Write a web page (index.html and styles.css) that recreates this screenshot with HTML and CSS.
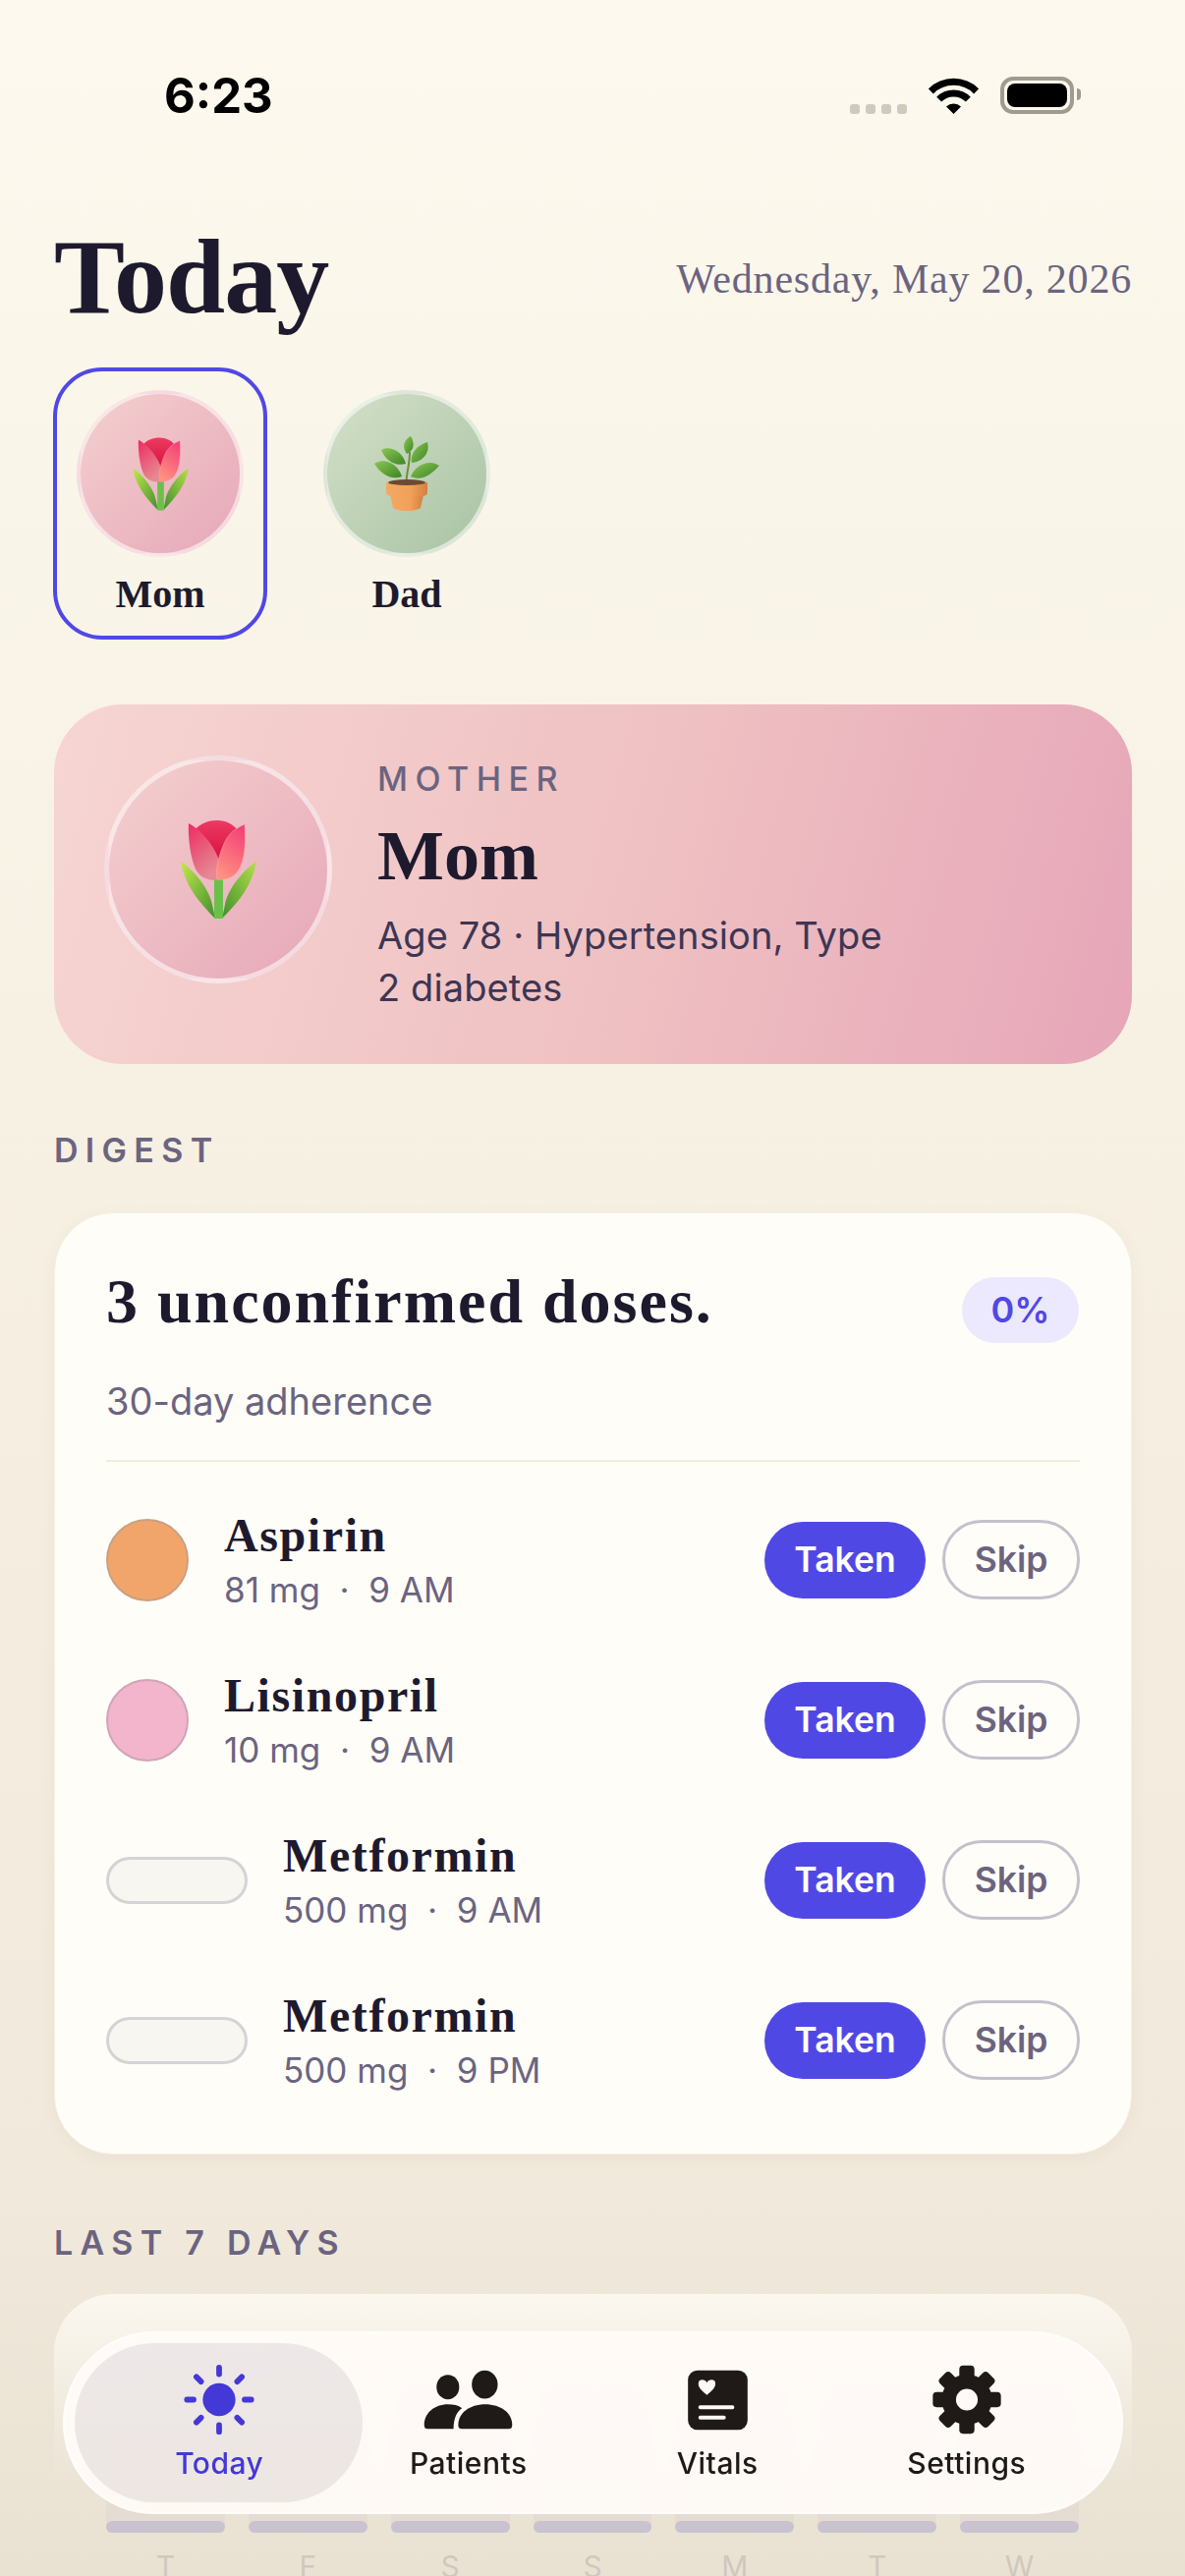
FILE: index.html
```html
<!DOCTYPE html>
<html lang="en">
<head>
  <meta charset="UTF-8">
  <meta name="viewport" content="width=device-width, initial-scale=1.0">
  <title>Today</title>
  <link rel="stylesheet" href="styles.css">
</head>
<body>
  <svg class="defs" aria-hidden="true">
    <defs>
      <linearGradient id="leafL" x1="0" y1="0" x2="1" y2="1">
        <stop offset="0" stop-color="#c4e84e"/><stop offset="1" stop-color="#3f8f2c"/>
      </linearGradient>
      <linearGradient id="leafR" x1="1" y1="0" x2="0" y2="1">
        <stop offset="0" stop-color="#b4e04a"/><stop offset="1" stop-color="#3f8f2c"/>
      </linearGradient>
      <linearGradient id="petalL" x1="0" y1="0" x2="0.5" y2="1">
        <stop offset="0" stop-color="#ee2a62"/><stop offset="1" stop-color="#e58a92"/>
      </linearGradient>
      <linearGradient id="petalR" x1="0.8" y1="0" x2="0.4" y2="1">
        <stop offset="0" stop-color="#f23f78"/><stop offset="1" stop-color="#ff8f80"/>
      </linearGradient>
      <linearGradient id="petalB" x1="0" y1="0" x2="0" y2="1">
        <stop offset="0" stop-color="#ec3a62"/><stop offset="1" stop-color="#d8103c"/>
      </linearGradient>
      <linearGradient id="plantLeaf" x1="0" y1="0" x2="1" y2="1">
        <stop offset="0" stop-color="#8cc652"/><stop offset="1" stop-color="#3c8526"/>
      </linearGradient>
      <linearGradient id="pot" x1="0" y1="0" x2="1" y2="0">
        <stop offset="0" stop-color="#f4a862"/><stop offset="0.6" stop-color="#f2a05a"/><stop offset="1" stop-color="#d58040"/>
      </linearGradient>
      <symbol id="tulip" viewBox="0 0 77 100">
        <path d="M0 42C10 48 29 68 32 86L35 100C27 91 5 72 0 42Z" fill="url(#leafL)"/>
        <path d="M77 42C67 48 48 68 45 86L42 100C50 91 72 72 77 42Z" fill="url(#leafR)"/>
        <path d="M34 58H43V100H34Z" fill="#6cc04a"/>
        <path d="M14 10C20 3 28 0 37 0C46 0 53 4 58 10L52 42H22Z" fill="url(#petalB)"/>
        <path d="M8 3C19 9 31 21 38 38L41 60C34 62 24 61 18 54C11 46 7 20 8 3Z" fill="url(#petalL)"/>
        <path d="M65 4C66 22 66 40 58 52C52 60 44 61 37 60C35 48 40 30 47 18C52 11 58 7 65 4Z" fill="url(#petalR)" stroke="#ffb0c0" stroke-width="0.500"/>
      </symbol>
      <symbol id="plant" viewBox="0 0 66 76">
        <path d="M32.500 46C33 36 36 28 36 16" fill="none" stroke="#6d8f3c" stroke-width="2"/>
        <path d="M33 18C27 10 31 3 37 0C41 7 41 14 33 18Z" fill="url(#plantLeaf)"/>
        <path d="M7 14C16 9 29 16 32 28C20 31 11 24 7 14Z" fill="url(#plantLeaf)"/>
        <path d="M54 6C57 17 49 26 38 27C36 17 44 9 54 6Z" fill="url(#plantLeaf)"/>
        <path d="M0 28C10 21 24 28 28 41C17 45 7 39 0 28Z" fill="url(#plantLeaf)"/>
        <path d="M66 30C56 23 42 29 37 41C48 46 58 39 66 30Z" fill="url(#plantLeaf)"/>
        <path d="M16 60H50L47 73C42 77 24 77 19 73Z" fill="url(#pot)"/>
        <path d="M12 47H54V57C54 61 50 61 46 61H20C16 61 12 61 12 57Z" fill="url(#pot)"/>
        <ellipse cx="33" cy="47" rx="19" ry="3" fill="#6b4a33"/>
      </symbol>
    </defs>
  </svg>

  <div class="page">
    <div class="status">
      <span class="clock">6:23</span>
      <div class="status-icons">
        <div class="signal"><i></i><i></i><i></i><i></i></div>
        <svg class="wifi" width="51" height="37" viewBox="0 0 51 37">
          <path d="M2.400 13.900A32.700 32.700 0 0 1 48.600 13.900" fill="none" stroke="#000" stroke-width="7"/>
          <path d="M10.650 22.150A21 21 0 0 1 40.350 22.150" fill="none" stroke="#000" stroke-width="7"/>
          <path d="M25.500 37L18 29.500A10.700 10.700 0 0 1 33 29.500Z"/>
        </svg>
        <div class="battery"><div class="battery-fill"></div></div>
      </div>
    </div>

    <header class="title-row">
      <h1>Today</h1>
      <div class="date">Wednesday, May 20, 2026</div>
    </header>

    <div class="people">
      <div class="person selected">
        <div class="face mom"><svg width="57" height="75"><use href="#tulip"/></svg></div>
        <div class="person-name">Mom</div>
      </div>
      <div class="person">
        <div class="face dad"><svg width="66" height="76"><use href="#plant"/></svg></div>
        <div class="person-name">Dad</div>
      </div>
    </div>

    <section class="hero">
      <div class="hero-face"><svg width="77" height="100"><use href="#tulip"/></svg></div>
      <div class="hero-text">
        <div class="kicker">MOTHER</div>
        <div class="hero-name">Mom</div>
        <p class="hero-info">Age 78 · Hypertension, Type 2 diabetes</p>
      </div>
    </section>

    <h2 class="section-label digest-label">DIGEST</h2>
    <section class="card digest">
      <div class="digest-head">
        <div class="digest-title">3 unconfirmed doses.</div>
        <div class="percent">0%</div>
      </div>
      <div class="digest-sub">30-day adherence</div>
      <div class="rule"></div>
      <div class="dose-list">
        <div class="dose">
          <div class="pill round orange"></div>
          <div class="dose-text"><div class="dose-name">Aspirin</div><div class="dose-sub">81 mg&nbsp; ·&nbsp; 9 AM</div></div>
          <div class="dose-actions"><button class="btn taken">Taken</button><button class="btn skip">Skip</button></div>
        </div>
        <div class="dose">
          <div class="pill round pink"></div>
          <div class="dose-text"><div class="dose-name">Lisinopril</div><div class="dose-sub">10 mg&nbsp; ·&nbsp; 9 AM</div></div>
          <div class="dose-actions"><button class="btn taken">Taken</button><button class="btn skip">Skip</button></div>
        </div>
        <div class="dose">
          <div class="pill capsule"></div>
          <div class="dose-text"><div class="dose-name">Metformin</div><div class="dose-sub">500 mg&nbsp; ·&nbsp; 9 AM</div></div>
          <div class="dose-actions"><button class="btn taken">Taken</button><button class="btn skip">Skip</button></div>
        </div>
        <div class="dose">
          <div class="pill capsule"></div>
          <div class="dose-text"><div class="dose-name">Metformin</div><div class="dose-sub">500 mg&nbsp; ·&nbsp; 9 PM</div></div>
          <div class="dose-actions"><button class="btn taken">Taken</button><button class="btn skip">Skip</button></div>
        </div>
      </div>
    </section>

    <h2 class="section-label week-label">LAST 7 DAYS</h2>
    <section class="card week">
      <div class="chart">
        <div class="day"><div class="track"><div class="fill"></div></div><span>T</span></div>
        <div class="day"><div class="track"><div class="fill"></div></div><span>F</span></div>
        <div class="day"><div class="track"><div class="fill"></div></div><span>S</span></div>
        <div class="day"><div class="track"><div class="fill"></div></div><span>S</span></div>
        <div class="day"><div class="track"><div class="fill"></div></div><span>M</span></div>
        <div class="day"><div class="track"><div class="fill"></div></div><span>T</span></div>
        <div class="day"><div class="track"><div class="fill"></div></div><span>W</span></div>
      </div>
    </section>

    <nav class="tabbar">
      <div class="tab active">
        <svg class="tab-icon" width="80" height="80" viewBox="0 0 80 80" fill="none" stroke="currentColor" stroke-width="6" stroke-linecap="round">
          <circle cx="40" cy="40" r="17.300" fill="currentColor" stroke="none"/>
          <path d="M40 6V13M40 67V74M6 40H13M67 40H74M16 16L20.900 20.900M59.100 59.100L64 64M16 64L20.900 59.100M59.100 20.900L64 16"/>
        </svg>
        <span>Today</span>
      </div>
      <div class="tab">
        <svg class="tab-icon" width="93" height="80" viewBox="0 -9 93 80" fill="currentColor">
          <ellipse cx="25" cy="17.700" rx="12" ry="13"/>
          <ellipse cx="64" cy="15" rx="13.700" ry="15"/>
          <path d="M36 58C36 45 48 36 64.500 36C81 36 93 45 93 58Q93 62 89 62H40Q36 62 36 58Z"/>
          <path d="M0 58C0 45 11 36 25 36C31 36 36 37 40 40C35 43 31 50 31 62H4Q0 62 0 58Z"/>
        </svg>
        <span>Patients</span>
      </div>
      <div class="tab">
        <svg class="tab-icon" width="63" height="80" viewBox="0 -9 63 80">
          <rect width="63" height="63" rx="10" fill="currentColor"/>
          <path d="M20 26C14 21 11 18 11 14C11 11 13 10 15 10C17 10 19 11 20 13C21 11 23 10 25 10C27 10 29 11 29 14C29 18 26 21 20 26Z" fill="#fdf9f5"/>
          <path d="M13 39H47M13 50H38" stroke="#fdf9f5" stroke-width="4" stroke-linecap="round"/>
        </svg>
        <span>Vitals</span>
      </div>
      <div class="tab">
        <svg class="tab-icon" width="80" height="80" viewBox="-40 -40 80 80" fill="currentColor">
          <circle r="19" fill="none" stroke="currentColor" stroke-width="15"/>
          <rect x="-8" y="-36" width="16" height="18" rx="4"/>
          <rect x="-8" y="-36" width="16" height="18" rx="4" transform="rotate(45)"/>
          <rect x="-8" y="-36" width="16" height="18" rx="4" transform="rotate(90)"/>
          <rect x="-8" y="-36" width="16" height="18" rx="4" transform="rotate(135)"/>
          <rect x="-8" y="-36" width="16" height="18" rx="4" transform="rotate(180)"/>
          <rect x="-8" y="-36" width="16" height="18" rx="4" transform="rotate(225)"/>
          <rect x="-8" y="-36" width="16" height="18" rx="4" transform="rotate(270)"/>
          <rect x="-8" y="-36" width="16" height="18" rx="4" transform="rotate(315)"/>
        </svg>
        <span>Settings</span>
      </div>
    </nav>
  </div>
</body>
</html>
```

FILE: styles.css
```css
body {
  margin: 0;
  font-family: Inter, "Noto Sans", sans-serif;
  color: #1e1a2e;
}
h1, h2, p {
  margin: 0;
}
button {
  font-family: inherit;
}
.defs {
  position: absolute;
  width: 0;
  height: 0;
}
.page {
  position: relative;
  width: 1206px;
  height: 2622px;
  overflow: hidden;
  box-sizing: border-box;
  padding: 0 54px 0 55px;
  background: linear-gradient(#fdf9ee, #f7f1e4 40%, #f1e9db 85%, #e9e2d3);
}

/* status bar */
.status {
  height: 228px;
  box-sizing: border-box;
  display: flex;
  justify-content: space-between;
  padding: 72px 0 0 112px;
}
.clock {
  font-size: 49px;
  line-height: 52px;
  font-weight: 700;
  color: #000;
}
.status-icons {
  display: flex;
  align-items: flex-start;
  gap: 22px;
  padding: 6px 0 0;
  margin-right: 59px;
}
.signal {
  display: flex;
  gap: 6px;
  margin-top: 28px;
}
.signal i {
  display: block;
  width: 10px;
  height: 10px;
  border-radius: 3px;
  background: #cfcabc;
}
.wifi {
  margin-top: 1px;
}
.battery {
  position: relative;
  width: 75px;
  height: 38px;
  box-sizing: border-box;
  border: 4px solid #a09b8f;
  border-radius: 13px;
  padding: 3px;
}
.battery::after {
  content: "";
  position: absolute;
  right: -11px;
  top: 8px;
  width: 4px;
  height: 12px;
  border-radius: 0 4px 4px 0;
  background: #a09b8f;
}
.battery-fill {
  height: 100%;
  background: #000;
  border-radius: 8px;
}

/* title */
.title-row {
  display: flex;
  justify-content: space-between;
  align-items: flex-start;
}
h1 {
  font-family: "Liberation Serif", serif;
  font-size: 108px;
  line-height: 108px;
  font-weight: 700;
  letter-spacing: -1px;
}
.date {
  margin-top: 32px;
  font-family: "Liberation Serif", serif;
  font-size: 42px;
  letter-spacing: 0.800px;
  color: #6b6480;
}

/* people */
.people {
  display: flex;
  gap: 33px;
  margin: 38px 0 0 -1px;
}
.person {
  width: 218px;
  box-sizing: border-box;
  border: 4px solid transparent;
  border-radius: 50px;
  padding: 19px 20px 20px;
}
.person.selected {
  border-color: #5048e5;
}
.face {
  width: 170px;
  height: 170px;
  box-sizing: border-box;
  border: 4px solid rgba(255, 255, 255, 0.55);
  border-radius: 50%;
  display: flex;
  align-items: center;
  justify-content: center;
}
.face.mom {
  background: linear-gradient(135deg, #f4d0cf, #e6a7b8);
}
.face.dad {
  background: linear-gradient(135deg, #d3e0c8, #a9c3a4);
}
.person-name {
  margin-top: 16px;
  font-family: "Liberation Serif", serif;
  font-size: 40px;
  line-height: 44px;
  font-weight: 700;
  text-align: center;
}

/* hero */
.hero {
  display: flex;
  align-items: flex-start;
  gap: 46px;
  margin-top: 66px;
  padding: 52px 51px 51px;
  border-radius: 70px;
  background: linear-gradient(105deg, #f6d5d2, #efc0c2 55%, #e6a6b8);
}
.hero-face {
  flex: none;
  width: 232px;
  height: 232px;
  box-sizing: border-box;
  border: 5px solid rgba(255, 255, 255, 0.55);
  border-radius: 50%;
  display: flex;
  align-items: center;
  justify-content: center;
  background: linear-gradient(135deg, #f4d0cf, #e6a7b8);
}
.hero-text {
  padding-top: 2px;
  width: 535px;
}
.kicker {
  font-size: 34px;
  line-height: 44px;
  font-weight: 500;
  letter-spacing: 7.500px;
  color: #6b6480;
}
.hero-name {
  margin-top: 16px;
  font-family: "Liberation Serif", serif;
  font-size: 72px;
  line-height: 80px;
  font-weight: 700;
}
.hero-info {
  margin-top: 15px;
  font-size: 38px;
  line-height: 53px;
  letter-spacing: 0.100px;
  color: #3d3654;
}

/* sections */
.section-label {
  font-size: 34px;
  line-height: 44px;
  font-weight: 600;
  letter-spacing: 7.300px;
  color: #6b6480;
}
.digest-label {
  margin-top: 66px;
}
.week-label {
  margin-top: 68px;
}
.card {
  box-sizing: border-box;
  border-radius: 60px;
}
.digest {
  margin-top: 41px;
  padding: 54px 52px 75px;
  background: #fffdf8;
  border: 1px solid #f6efe2;
  box-shadow: 0 4px 16px rgba(120, 100, 70, 0.06);
}
.digest-head {
  display: flex;
  justify-content: space-between;
  align-items: flex-start;
}
.digest-title {
  font-family: "Liberation Serif", serif;
  font-size: 64px;
  line-height: 72px;
  font-weight: 700;
  letter-spacing: 2px;
}
.percent {
  width: 119px;
  height: 67px;
  margin: 11px 1px 0 0;
  border-radius: 34px;
  background: #ece9fe;
  color: #5048e5;
  font-size: 36px;
  font-weight: 600;
  line-height: 67px;
  text-align: center;
}
.digest-sub {
  margin-top: 34px;
  font-size: 38px;
  line-height: 50px;
  color: #6b6480;
}
.rule {
  height: 2px;
  margin-top: 35px;
  background: #f3ecdd;
}
.dose-list {
  display: flex;
  flex-direction: column;
  gap: 82px;
  margin-top: 59px;
}
.dose {
  display: flex;
  align-items: center;
  gap: 36px;
  height: 81px;
}
.pill {
  flex: none;
  box-sizing: border-box;
}
.pill.round {
  width: 84px;
  height: 84px;
  border-radius: 50%;
}
.pill.orange {
  background: #f2a56a;
  border: 2px solid #c9a084;
}
.pill.pink {
  background: #f2b5cb;
  border: 2px solid #cfa5b6;
}
.pill.capsule {
  width: 144px;
  height: 48px;
  border-radius: 24px;
  background: #f8f6f1;
  border: 3px solid #d6d2d6;
}
.dose-name {
  font-family: "Liberation Serif", serif;
  font-size: 48px;
  line-height: 56px;
  font-weight: 700;
  letter-spacing: 1.600px;
}
.dose-sub {
  margin-top: 4px;
  font-size: 35px;
  line-height: 46px;
  color: #6b6480;
}
.dose-actions {
  display: flex;
  align-items: center;
  gap: 17px;
  margin-left: auto;
}
.btn {
  box-sizing: border-box;
  padding: 0;
  font-size: 35.500px;
  font-weight: 600;
  border-radius: 40px;
}
.btn.taken {
  width: 164px;
  height: 78px;
  border: 0;
  background: #5048e5;
  color: #fff;
}
.btn.skip {
  width: 140px;
  height: 81px;
  border: 3px solid #c4c1cb;
  background: transparent;
  color: #6b6480;
}

/* week card, fades out under the tab bar */
.week {
  margin-top: 30px;
  height: 330px;
  padding: 64px 54px 0 53px;
  background: linear-gradient(rgba(255, 253, 248, 0.75), rgba(255, 253, 248, 0.3) 30%, rgba(255, 253, 248, 0) 60%);
}
.chart {
  display: flex;
  gap: 24px;
}
.day {
  flex: 1;
  text-align: center;
  font-size: 30px;
  color: #cfc8bd;
}
.track {
  position: relative;
  height: 179px;
  margin-bottom: 16px;
  border-radius: 6px;
  background: rgba(110, 95, 170, 0.05);
}
.fill {
  position: absolute;
  left: 0;
  right: 0;
  bottom: 0;
  height: 12px;
  border-radius: 6px;
  background: #c9c3d0;
}

/* tab bar */
.tabbar {
  position: absolute;
  left: 64px;
  top: 2373px;
  width: 1079px;
  height: 186px;
  box-sizing: border-box;
  display: grid;
  grid-template-columns: repeat(4, 253.500px);
  padding: 31px 0 0 32.500px;
  border-radius: 93px;
  background: rgba(255, 251, 247, 0.93);
  backdrop-filter: blur(6px);
  box-shadow: inset 0 0 0 2px rgba(255, 255, 255, 0.45);
  color: #1f1a18;
}
.tab {
  position: relative;
  display: flex;
  flex-direction: column;
  align-items: center;
  height: 122px;
  font-size: 30px;
  line-height: 38px;
  font-weight: 500;
  letter-spacing: 0.500px;
}
.tab > * {
  position: relative;
}
.tab-icon {
  display: block;
  margin-bottom: 7px;
}
.tab.active {
  color: #4438d6;
}
.tab.active::before {
  content: "";
  position: absolute;
  left: -21px;
  right: -19px;
  top: -19px;
  bottom: -21px;
  border-radius: 81px;
  background: linear-gradient(rgba(70, 40, 90, 0.09), rgba(70, 50, 30, 0.09));
}
```
